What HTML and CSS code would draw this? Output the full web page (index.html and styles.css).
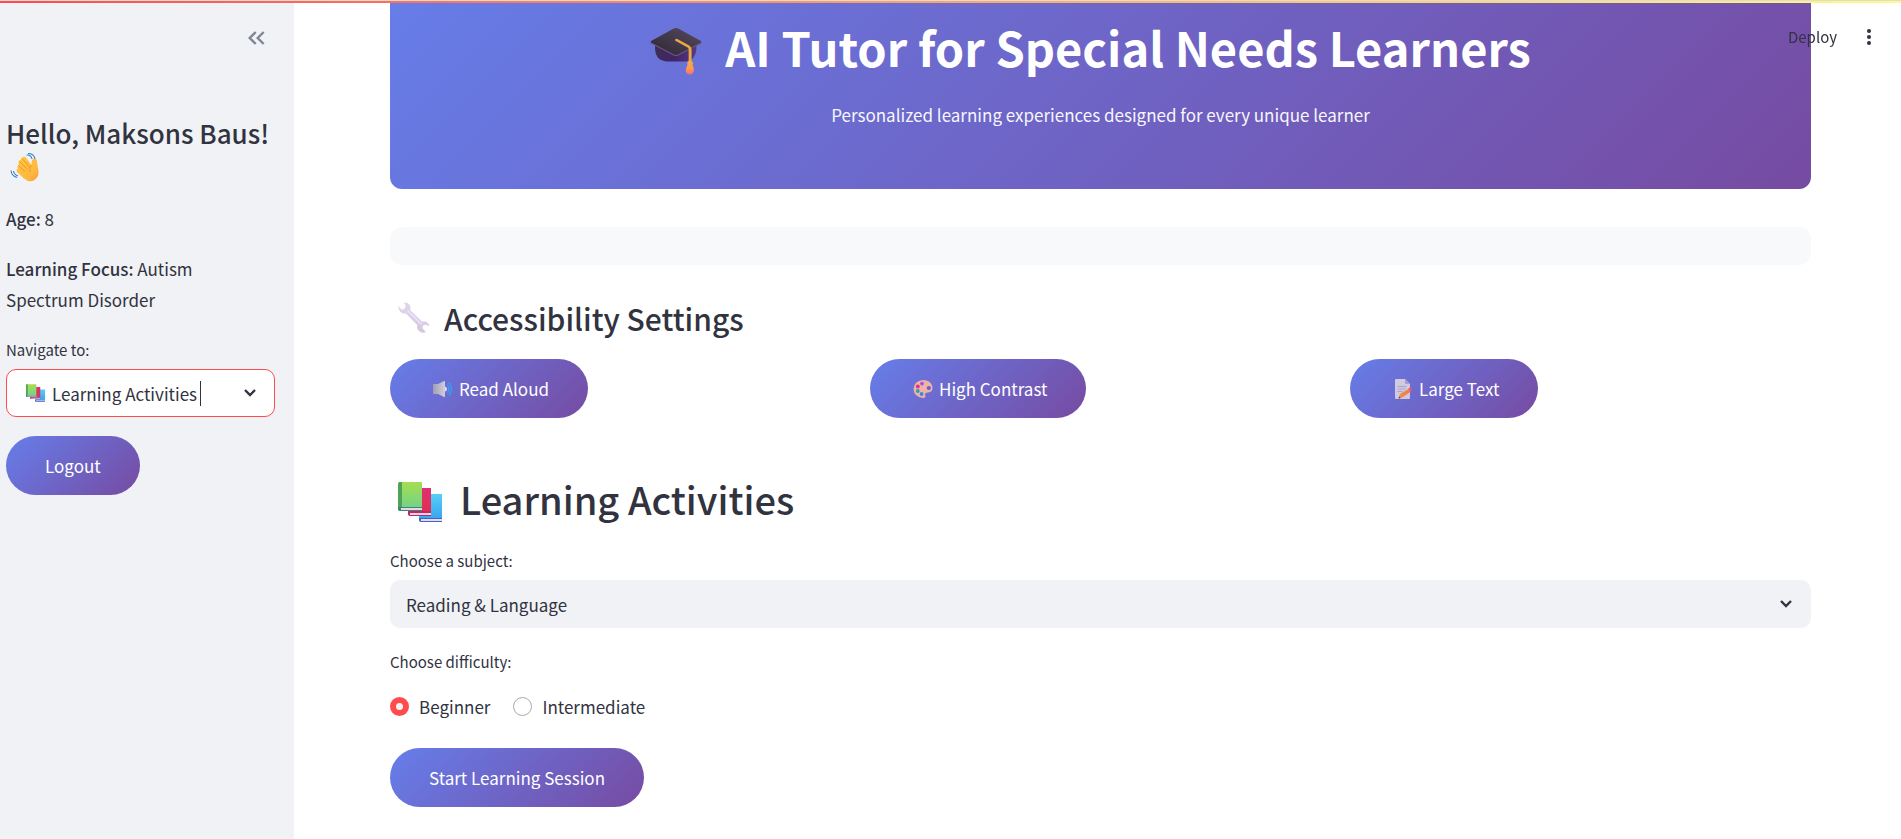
FILE: index.html
```html
<!DOCTYPE html>
<html lang="en">
<head>
<meta charset="utf-8">
<meta name="viewport" content="width=device-width, initial-scale=1">
<title>AI Tutor for Special Needs Learners</title>
<link rel="stylesheet" href="styles.css">
</head>
<body>
<svg class="defs" aria-hidden="true">
  <defs>
    <linearGradient id="g-green" x1="0" y1="0" x2="0" y2="1"><stop offset="0" stop-color="#a5de4e"/><stop offset="1" stop-color="#6dd191"/></linearGradient>
    <linearGradient id="g-red" x1="0" y1="0" x2="0" y2="1"><stop offset="0" stop-color="#e02f73"/><stop offset="1" stop-color="#e0304a"/></linearGradient>
    <linearGradient id="g-blue" x1="0" y1="0" x2="0" y2="1"><stop offset="0" stop-color="#55d0f8"/><stop offset="1" stop-color="#359fee"/></linearGradient>
    <linearGradient id="g-wrench" x1="0" y1="0" x2="0" y2="1"><stop offset="0" stop-color="#dcd8e0"/><stop offset=".5" stop-color="#dccdf0"/><stop offset="1" stop-color="#d2c9da"/></linearGradient>
    <linearGradient id="g-cap" x1="0" y1="1" x2="1" y2="0"><stop offset="0" stop-color="#2c2532"/><stop offset="1" stop-color="#574b60"/></linearGradient>
    <linearGradient id="g-capbase" x1="0" y1="0" x2="1" y2="0"><stop offset="0" stop-color="#3c2f55"/><stop offset=".5" stop-color="#43226a"/><stop offset="1" stop-color="#573b80"/></linearGradient>
    <linearGradient id="g-tassel" x1="0" y1="0" x2="0" y2="1"><stop offset="0" stop-color="#f3ad45"/><stop offset=".6" stop-color="#ff9850"/><stop offset="1" stop-color="#fb6a72"/></linearGradient>
    <linearGradient id="g-hand" x1="0" y1="0" x2="1" y2="1"><stop offset="0" stop-color="#ffc83d"/><stop offset=".7" stop-color="#ffb83f"/><stop offset="1" stop-color="#f59a3c"/></linearGradient>
    <linearGradient id="g-speaker" x1="0" y1="0" x2="1" y2="0"><stop offset="0" stop-color="#a9a3ad"/><stop offset="1" stop-color="#dcd6e2"/></linearGradient>
    <linearGradient id="g-pencil" x1="0" y1="1" x2="1" y2="0"><stop offset="0" stop-color="#ff9a3c"/><stop offset="1" stop-color="#ff7b35"/></linearGradient>
    <symbol id="books" viewBox="0 0 44 40">
      <path d="M21 12h23v25l-1 3H23l-2-3z" fill="url(#g-blue)"/><path d="M21 36h23v4H23q-2 0-2-2z" fill="#3f62cc"/><path d="M23 37h21v2H23z" fill="#e8d9f5"/>
      <path d="M10 6h23v28H12l-2-2z" fill="url(#g-red)"/><path d="M10 29h23v5H12q-2 0-2-2z" fill="#c32665"/><path d="M12 31h21v2H12z" fill="#ecd4e8"/>
      <path d="M2 0h22v29H2q-2 0-2-2V2q0-2 2-2z" fill="url(#g-green)"/><path d="M1 0h3v26H0V2z" fill="#4fa257"/><path d="M0 25h24v4H3q-3 0-3-2z" fill="#3e8670"/><path d="M3 26h21v2H3z" fill="#e2d9f0"/>
    </symbol>
  </defs>
</svg>

<div class="decoration"></div>
<header class="toolbar">
  <button class="toolbar-button" type="button">Deploy</button>
  <button class="toolbar-button" type="button" aria-label="Main menu">
    <svg width="6" height="18" viewBox="0 0 6 18" fill="#31333f"><circle cx="3" cy="3" r="2"/><circle cx="3" cy="9" r="2"/><circle cx="3" cy="15" r="2"/></svg>
  </button>
</header>

<div class="app">
  <aside class="sidebar">
    <button class="collapse" type="button" aria-label="Collapse sidebar">
      <svg width="18" height="14" viewBox="0 0 18 14" fill="none" stroke="#808495" stroke-width="2.400"><path d="M8.700 1L2.700 7l6 6M16.700 1l-6 6 6 6"/></svg>
    </button>
    <h2 class="greeting">Hello, Maksons Baus!
      <svg class="wave" viewBox="0 0 30 30" aria-label="waving hand" role="img">
        <path d="M8 15.500q-1.500-2 .5-3.300L8.600 9.400Q8 7.500 10 7l1 .3Q10.500 4.500 13 4.300q1-1.500 3 .2l5.500 7.500.3-4q.5-3 3.400-2.500 2 .5 1.800 3.500l1.500 9q.5 6-4 9-5.500 3-10.500-1.500L7 19q-1.500-2 1-3.500z" fill="url(#g-hand)"/>
        <path d="M8.500 12.500l6.500 6M9.500 8.500l8 8M12.500 6l7.500 8.500M21.500 12q-2.500 3-1.500 7" fill="none" stroke="#e8922f" stroke-width=".9"/>
        <path d="M16.500 2q4.500-.5 5.500 4M18 .5q6 0 7 5.500M3.500 18q.5 3.500 4.500 5M1 17.500q.5 5.500 6 7" fill="none" stroke="#2f82c8" stroke-width="1.100"/>
      </svg>
    </h2>
    <p class="fact"><strong>Age:</strong> 8</p>
    <p class="fact"><strong>Learning Focus:</strong> Autism Spectrum Disorder</p>
    <label class="label" for="nav">Navigate to:</label>
    <div class="combo">
      <svg class="combo-icon" aria-hidden="true"><use href="#books"/></svg>
      <input id="nav" class="combo-input" type="text" role="combobox" aria-expanded="false" value="Learning Activities">
      <span class="caret"></span>
      <svg class="chevron" viewBox="0 0 14 10"><path d="M2 2l5 5 5-5"/></svg>
    </div>
    <button class="pill" type="button">Logout</button>
  </aside>

  <main class="main">
    <section class="hero">
      <h1 class="hero-title">
        <svg class="cap" viewBox="0 0 46 48" preserveAspectRatio="none" role="img" aria-label="graduation cap">
          <path d="M4.500 18h36.500v5q-1 10-9 11.500H14Q5 33 4.500 23z" fill="url(#g-capbase)"/>
          <path d="M21 1.500q2-1 4 0L45 14q1 1 0 2L25 28q-2 1-4 0L1 16q-1-1 0-2z" fill="url(#g-cap)"/>
          <path d="M1 16l20 12q2 1 4 0l20-12" fill="none" stroke="#675675"/>
          <path d="M23.500 13L34 19.500q1.500 1 1.500 3V35" fill="none" stroke="#e9a943" stroke-width="2.600" stroke-linecap="round"/>
          <path d="M33 36q0-2 2.500-2t2.500 2l-.3 2q1.500 3 1 6-1 3.500-3.500 3.500t-3.500-3q0-4 1.500-6.500z" fill="url(#g-tassel)"/>
        </svg>
        AI Tutor for Special Needs Learners
      </h1>
      <p class="hero-text">Personalized learning experiences designed for every unique learner</p>
    </section>

    <div class="panel"></div>

    <h3 class="section-title">
      <svg class="wrench" viewBox="0 0 32 32" aria-hidden="true">
        <path d="M6 .5q4-.5 6 3 1 2.500.3 4.700l12 11.600q3.200-.8 5.500 1.200 1.500 1.300 1.800 3l-4-1.200q-2.300-.3-3 1.700-.5 2 1 3l2.500 2.700q-4.600 1.500-7.700-1.700-2-2.500-1.300-5.500L8 11.500q-3 .5-5.500-1.500Q0 7.500.3 3.500L3 7q1.500 1 3 0 2-1.500 1.500-3.500z" fill="url(#g-wrench)"/>
        <path d="M9.500 8.500l14 13.800" stroke="#eee3fa" stroke-width="1.500"/>
      </svg>
      Accessibility Settings
    </h3>
    <div class="columns">
      <div><button class="pill" type="button">
        <svg class="emoji" viewBox="0 0 20 20" aria-hidden="true"><path d="M1 5h4l6-3q1-.5 1 1v14q0 1.500-1 1l-6-3H1q-1 0-1-1V6q0-1 1-1z" fill="url(#g-speaker)"/><path d="M12 7.500q2 .5 2 2.500t-2 2.500z" fill="#f2edf7"/><path d="M14.500 6q2.500 4 0 8M16 3.500q5 6.500 0 13" fill="none" stroke="#36a5ee" stroke-width="1.500"/></svg>
        Read Aloud</button></div>
      <div><button class="pill" type="button">
        <svg class="emoji" viewBox="0 0 20 20" aria-hidden="true"><path d="M10 1q8 0 9.500 7 .5 5-4.500 5.500-3 0-3 2 1.500 3.500-2 3.500Q1 18 .5 10 1 2 10 1z" fill="#ffb9a5"/><circle cx="4.800" cy="7.500" r="1.900" fill="#e4307c"/><circle cx="9" cy="4.600" r="1.900" fill="#b44ae8"/><circle cx="4.800" cy="12" r="1.900" fill="#24ad9b"/><circle cx="8.600" cy="15" r="1.900" fill="#338de0"/><circle cx="15.800" cy="9" r="2.100" fill="#5f65c8"/></svg>
        High Contrast</button></div>
      <div><button class="pill" type="button">
        <svg class="emoji" viewBox="0 0 20 20" aria-hidden="true"><path d="M3 0h9l5 5v14q0 1-1 1H3q-1 0-1-1V1q0-1 1-1z" fill="#dcd3e6"/><path d="M12 0l5 5h-4q-1 0-1-1z" fill="#b1a2c5"/><path d="M4.500 7.500h9M4.500 10h8M4.500 12.500h5" stroke="#b5aabd"/><path d="M7 15l8.500-5 2 2.800L9.500 18.500l-4 1z" fill="url(#g-pencil)"/><path d="M5.500 19.500l.7-2 1.500 1.600z" fill="#51362e"/><path d="M15 10l2-1.500q1.500-.5 2 1t-1.500 3z" fill="#f35768"/></svg>
        Large Text</button></div>
    </div>

    <h2 class="page-title"><svg class="title-icon" aria-hidden="true"><use href="#books"/></svg>Learning Activities</h2>

    <label class="label" for="subject">Choose a subject:</label>
    <div class="select-wrap">
      <select id="subject" class="select"><option>Reading &amp; Language</option></select>
      <svg class="chevron" viewBox="0 0 14 10"><path d="M2 2l5 5 5-5"/></svg>
    </div>

    <fieldset class="difficulty">
      <legend class="label">Choose difficulty:</legend>
      <div class="radios">
        <label class="radio"><input type="radio" name="difficulty" checked>Beginner</label>
        <label class="radio"><input type="radio" name="difficulty">Intermediate</label>
      </div>
    </fieldset>
    <button class="pill" type="button">Start Learning Session</button>
  </main>
</div>
</body>
</html>
```
FILE: styles.css
```css
* {
  box-sizing: border-box;
}

body {
  margin: 0;
  height: 100vh;
  overflow: hidden;
  background: #fff;
  color: #31333f;
  font-family: "Noto Sans CJK SC", "Noto Sans", sans-serif;
  font-size: 17px;
  line-height: 31px;
}

h1, h2, h3, p, fieldset {
  margin: 0;
  padding: 0;
  border: 0;
}

button, input, select {
  font: inherit;
  color: inherit;
}

.defs {
  position: absolute;
  width: 0;
  height: 0;
}

.decoration {
  position: fixed;
  inset: 0 0 auto 0;
  z-index: 3;
  height: 3px;
  border-top: 1px solid #dcdcdc;
  background: linear-gradient(90deg, #ff4b4b, #fffd80);
}

.toolbar {
  position: fixed;
  top: 3px;
  right: 22px;
  z-index: 2;
  display: flex;
  align-items: center;
  gap: 22px;
  height: 68px;
}

.toolbar-button {
  display: flex;
  padding: 0 7px 0 0;
  border: 0;
  background: none;
  font-size: 15px;
  line-height: 22px;
}

.app {
  display: flex;
  min-height: 100vh;
}

.sidebar {
  flex: 0 0 294px;
  padding: 28px 19px 0 6px;
  background: #f0f2f6;
}

.collapse {
  display: flex;
  margin: 0 10px 67px auto;
  padding: 3px 0;
  border: 0;
  background: none;
}

.greeting {
  margin-bottom: 20px;
  font-size: 26px;
  font-weight: 500;
  line-height: 35px;
}

.wave {
  display: block;
  width: 30px;
  height: 30px;
  margin: 3px 0 0 4px;
}

.fact {
  margin-bottom: 19px;
  padding-right: 19px;
}

.fact strong {
  font-weight: 500;
}

.label {
  display: block;
  margin-bottom: 8px;
  padding: 0;
  font-size: 15px;
  line-height: 22px;
}

.sidebar .label {
  margin-top: 24px;
}

.combo {
  display: flex;
  align-items: center;
  height: 48px;
  margin-bottom: 19px;
  padding: 0 17px 0 19px;
  border: 1px solid #ff4b4b;
  border-radius: 10px;
  background: #fff;
}

.combo-icon {
  width: 19px;
  height: 18px;
  margin-right: 7px;
}

.combo-input {
  min-width: 0;
  padding: 0;
  border: 0;
  outline: 0;
  background: none;
  field-sizing: content;
}

.caret {
  width: 1px;
  height: 25px;
  margin-left: 3px;
  background: #31333f;
}

.chevron {
  width: 14px;
  height: 10px;
  margin-left: auto;
  fill: none;
  stroke: #31333f;
  stroke-width: 2.4;
}

.pill {
  display: inline-flex;
  align-items: center;
  gap: 6px;
  height: 59px;
  padding: 0 39px;
  border: 0;
  border-radius: 30px;
  background: linear-gradient(135deg, #667eea 0%, #764ba2 100%);
  color: #fff;
}

.emoji {
  width: 20px;
  height: 20px;
  margin-left: 4px;
  opacity: .9;
}

.main {
  flex: 1;
  min-width: 0;
  padding: 0 90px 30px 96px;
}

.hero {
  margin-top: -40px;
  padding: 55px 38px 59px;
  border-radius: 12px;
  background: linear-gradient(135deg, #667eea 0%, #764ba2 100%);
  color: #fff;
  text-align: center;
}

.hero-title {
  display: flex;
  align-items: center;
  justify-content: center;
  gap: 23px;
  margin: 0 20px 21px 0;
  font-size: 47px;
  font-weight: 700;
  line-height: 64px;
}

.cap {
  width: 52px;
  height: 48px;
  margin-top: 8px;
}

.hero-text {
  font-size: 17px;
  line-height: 30px;
  opacity: .95;
}

.panel {
  height: 38px;
  margin: 38px 0 35px;
  border-radius: 12px;
  background: #f8f9fb;
}

.section-title {
  display: flex;
  align-items: center;
  gap: 14px;
  margin-bottom: 23px;
  padding-left: 8px;
  font-size: 30px;
  font-weight: 500;
  line-height: 36px;
}

.wrench {
  width: 32px;
  height: 32px;
}

.columns {
  display: grid;
  grid-template-columns: repeat(3, 1fr);
  gap: 19px;
}

.columns > div {
  display: flex;
}

.page-title {
  display: flex;
  align-items: center;
  gap: 18px;
  margin: 57px 0 27px;
  padding-left: 8px;
  font-size: 38px;
  font-weight: 500;
  line-height: 48px;
}

.title-icon {
  width: 44px;
  height: 40px;
  margin-top: 5px;
}

.select-wrap {
  display: flex;
  align-items: center;
  position: relative;
  margin-bottom: 23px;
}

.select {
  flex: 1;
  height: 48px;
  padding: 0 16px;
  border: 0;
  border-radius: 10px;
  background: #f0f2f6;
  appearance: none;
}

.select-wrap .chevron {
  position: absolute;
  right: 18px;
  pointer-events: none;
}

.difficulty {
  margin-bottom: 26px;
}

.radios {
  display: flex;
  gap: 23px;
  padding-top: 10px;
}

.radio {
  display: flex;
  align-items: center;
  gap: 10px;
}

.radio input {
  width: 19px;
  height: 19px;
  margin: 0;
  border: 1px solid #a9aab2;
  border-radius: 50%;
  appearance: none;
}

.radio input:checked {
  border: 6px solid #ff4b4b;
  background: #f0f2f6;
}
```
